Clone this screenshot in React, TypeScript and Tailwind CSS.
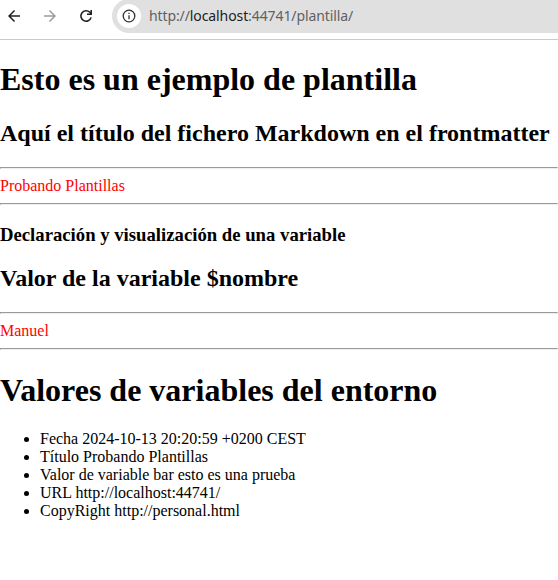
import type { ReactNode } from "react";

function Toolbar() {
  return (
    <header className="flex h-10 items-start overflow-hidden border-b border-[#c8cacb] bg-white">
      <svg className="mt-[7px] ml-[5px] size-[18px] shrink-0" viewBox="0 0 24 24" fill="#202124">
        <path d="M20 11H7.83l5.59-5.59L12 4l-8 8 8 8 1.41-1.41L7.83 13H20v-2z" />
      </svg>
      <svg className="mt-[7px] ml-[18px] size-[18px] shrink-0" viewBox="0 0 24 24" fill="#9b9c9d">
        <path d="M12 4l-1.41 1.41L16.17 11H4v2h12.17l-5.58 5.59L12 20l8-8-8-8z" />
      </svg>
      <svg className="mt-[7px] ml-[18px] size-[18px] shrink-0" viewBox="0 0 18 18" fill="none" stroke="#202124" strokeWidth="1.6">
        <path d="M14.1 10.4A5.2 5.2 0 1 1 12.8 5.3L14 6.6" />
        <path d="M14.2 3v4.2H10" />
      </svg>
      <div className="-mt-px ml-[17px] flex h-[34px] flex-1 items-center rounded-l-full bg-[#e0e0e0] pl-[5px]">
        <span className="flex size-6 shrink-0 items-center justify-center rounded-full bg-white">
          <svg className="size-[14px]" viewBox="0 0 14 14" fill="none" stroke="#303134" strokeWidth="1.3">
            <circle cx="7" cy="7" r="5.8" />
            <path d="M7 6.2v4M7 3.7v1.4" />
          </svg>
        </span>
        <span className="ml-2 font-['Noto_Sans',sans-serif] text-[14px] leading-[18px] tracking-[-0.1px] whitespace-nowrap text-[#5f6163]">
          http://<span className="text-[#202124]">localhost</span>:44741/plantilla/
        </span>
      </div>
    </header>
  );
}

function Rule() {
  return <hr className="my-2 h-[2px] border border-t-[#9a9a9a] border-r-[#eeeeee] border-b-[#eeeeee] border-l-[#9a9a9a]" />;
}

function RedText({ children }: { children: ReactNode }) {
  return <div className="text-[#ff0000]">{children}</div>;
}

const environment = [
  "Fecha 2024-10-13 20:20:59 +0200 CEST",
  "Título Probando Plantillas",
  "Valor de variable bar esto es una prueba",
  "URL http://localhost:44741/",
  "CopyRight http://personal.html",
];

export default function App() {
  return (
    <div className="h-[580px] overflow-hidden bg-white text-black">
      <Toolbar />
      <main className="flow-root font-['Liberation_Serif',serif] text-[16px] leading-[18px]">
        <h1 className="my-[21.44px] text-[32px] leading-[37px] font-bold whitespace-nowrap">Esto es un ejemplo de plantilla</h1>
        <h2 className="my-[19.92px] text-[24px] leading-[27px] font-bold whitespace-nowrap">
          Aquí el título del fichero Markdown en el frontmatter
        </h2>
        <Rule />
        <RedText>Probando Plantillas</RedText>
        <Rule />
        <h3 className="my-[18.72px] text-[18.72px] leading-[22px] font-bold">Declaración y visualización de una variable</h3>
        <h2 className="my-[19.92px] text-[24px] leading-[27px] font-bold">Valor de la variable $nombre</h2>
        <Rule />
        <RedText>Manuel</RedText>
        <Rule />
        <h1 className="my-[21.44px] text-[32px] leading-[37px] font-bold">Valores de variables del entorno</h1>
        <ul className="my-4 list-disc pl-10">
          {environment.map((line) => (
            <li key={line}>{line}</li>
          ))}
        </ul>
      </main>
    </div>
  );
}
